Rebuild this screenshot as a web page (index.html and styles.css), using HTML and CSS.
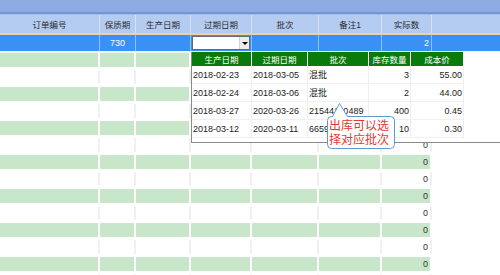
FILE: index.html
```html
<!DOCTYPE html>
<html lang="zh">
<head>
<meta charset="utf-8">
<link rel="stylesheet" href="styles.css">
</head>
<body>
<div class="app">
  <div class="titlebar"></div>
  <div class="rule"></div>
  <div class="row head">
    <div class="c">订单编号</div>
    <div class="c">保质期</div>
    <div class="c">生产日期</div>
    <div class="c">过期日期</div>
    <div class="c">批次</div>
    <div class="c">备注1</div>
    <div class="c">实际数</div>
    <div class="c fill"></div>
  </div>
  <div class="row sel">
    <div class="c"></div>
    <div class="c center">730</div>
    <div class="c"></div>
    <div class="c combo-cell"><div class="combo"><span class="combo-btn"><span class="arrow"></span></span></div></div>
    <div class="c"></div>
    <div class="c"></div>
    <div class="c num">2</div>
    <div class="c fill"></div>
  </div>
  <div class="rows">
    <div class="drow g"><div class="c"></div><div class="c"></div><div class="c"></div><div class="c"></div><div class="c"></div><div class="c"></div><div class="c num"></div></div>
    <div class="drow"><div class="c"></div><div class="c"></div><div class="c"></div><div class="c"></div><div class="c"></div><div class="c"></div><div class="c num"></div></div>
    <div class="drow g"><div class="c"></div><div class="c"></div><div class="c"></div><div class="c"></div><div class="c"></div><div class="c"></div><div class="c num"></div></div>
    <div class="drow"><div class="c"></div><div class="c"></div><div class="c"></div><div class="c"></div><div class="c"></div><div class="c"></div><div class="c num"></div></div>
    <div class="drow g"><div class="c"></div><div class="c"></div><div class="c"></div><div class="c"></div><div class="c"></div><div class="c"></div><div class="c num"></div></div>
    <div class="drow"><div class="c"></div><div class="c"></div><div class="c"></div><div class="c"></div><div class="c"></div><div class="c"></div><div class="c num">0</div></div>
    <div class="drow g"><div class="c"></div><div class="c"></div><div class="c"></div><div class="c"></div><div class="c"></div><div class="c"></div><div class="c num">0</div></div>
    <div class="drow"><div class="c"></div><div class="c"></div><div class="c"></div><div class="c"></div><div class="c"></div><div class="c"></div><div class="c num">0</div></div>
    <div class="drow g"><div class="c"></div><div class="c"></div><div class="c"></div><div class="c"></div><div class="c"></div><div class="c"></div><div class="c num">0</div></div>
    <div class="drow"><div class="c"></div><div class="c"></div><div class="c"></div><div class="c"></div><div class="c"></div><div class="c"></div><div class="c num">0</div></div>
    <div class="drow g"><div class="c"></div><div class="c"></div><div class="c"></div><div class="c"></div><div class="c"></div><div class="c"></div><div class="c num">0</div></div>
    <div class="drow"><div class="c"></div><div class="c"></div><div class="c"></div><div class="c"></div><div class="c"></div><div class="c"></div><div class="c num">0</div></div>
    <div class="drow g"><div class="c"></div><div class="c"></div><div class="c"></div><div class="c"></div><div class="c"></div><div class="c"></div><div class="c num">0</div></div>
    <div class="drow"><div class="c"></div><div class="c"></div><div class="c"></div><div class="c"></div><div class="c"></div><div class="c"></div><div class="c num"></div></div>
  </div>

  <div class="popup">
    <div class="prow phead">
      <div class="p">生产日期</div>
      <div class="p">过期日期</div>
      <div class="p">批次</div>
      <div class="p">库存数量</div>
      <div class="p">成本价</div>
    </div>
    <div class="prow">
      <div class="p">2018-02-23</div>
      <div class="p">2018-03-05</div>
      <div class="p">混批</div>
      <div class="p r">3</div>
      <div class="p r">55.00</div>
    </div>
    <div class="prow">
      <div class="p">2018-02-24</div>
      <div class="p">2018-03-06</div>
      <div class="p">混批</div>
      <div class="p r">2</div>
      <div class="p r">44.00</div>
    </div>
    <div class="prow">
      <div class="p">2018-03-27</div>
      <div class="p">2020-03-26</div>
      <div class="p">21544110489</div>
      <div class="p r">400</div>
      <div class="p r">0.45</div>
    </div>
    <div class="prow">
      <div class="p">2018-03-12</div>
      <div class="p">2020-03-11</div>
      <div class="p">66590001</div>
      <div class="p r">10</div>
      <div class="p r">0.30</div>
    </div>
  </div>

  <div class="callout">
    <svg class="bubble" width="72" height="50" viewBox="0 0 72 50">
      <path d="M7.5,15.5 L14.5,2.5 L22.5,15.5 L65.5,15.5 Q69.5,15.5 69.5,19.5 L69.5,43.5 Q69.5,47.5 65.5,47.5 L6.5,47.5 Q2.5,47.5 2.5,43.5 L2.5,19.5 Q2.5,15.5 6.5,15.5 Z" fill="#ffffff" stroke="#5b9bd5" stroke-width="1"/>
    </svg>
    <div class="callout-text">出库可以选<br>择对应批次</div>
  </div>
</div>
</body>
</html>
```

FILE: styles.css
```css
html, body {
  margin: 0;
  padding: 0;
  background: #ffffff;
}
body {
  width: 500px;
  height: 275px;
  overflow: hidden;
  font-family: "Liberation Sans", "Noto Sans CJK SC", sans-serif;
  font-size: 9px;
  color: #222;
}
.app {
  position: relative;
  width: 500px;
  height: 275px;
  overflow: hidden;
}
.titlebar {
  height: 12px;
  background: #8eaae3;
}
.rule {
  height: 1px;
  border-top: 2px solid #7893d0;
  background: #a3bcec;
}
.row {
  display: grid;
  grid-template-columns: 100px 36px 55px 61px 67px 63px 50px 1fr;
}
.row .c {
  box-sizing: border-box;
  border-right: 1px solid #d6e3f6;
  display: flex;
  align-items: center;
  justify-content: center;
  white-space: nowrap;
}
.row .c.fill {
  border-right: none;
}
.head {
  height: 20px;
  box-sizing: border-box;
  background: #b5ccf1;
  border-bottom: 2px solid #e4d6aa;
  font-size: 8.5px;
  color: #2a2a2a;
}
.sel {
  height: 18px;
  box-sizing: border-box;
  background: #3a90f5;
  border-bottom: 2px solid #eef3f8;
  color: #fff;
}
.sel .c {
  border-right-color: #8fc0f8;
}
.sel .c.num, .drow .c.num {
  justify-content: flex-end;
  padding-right: 2px;
}
.combo-cell {
  align-items: flex-start !important;
  justify-content: flex-start !important;
  padding: 1px 0 0 1px;
}
.combo {
  box-sizing: border-box;
  width: 58px;
  height: 14px;
  background: #fff;
  border: 1px solid #6a6a6a;
  display: flex;
  justify-content: flex-end;
  align-items: stretch;
}
.combo-btn {
  width: 9px;
  background: #ececec;
  border-left: 1px solid #d0d0d0;
  display: flex;
  align-items: center;
  justify-content: center;
}
.arrow {
  width: 0;
  height: 0;
  border-left: 3px solid transparent;
  border-right: 3px solid transparent;
  border-top: 3px solid #000;
}
.rows {
  width: 432px;
}
.drow {
  display: grid;
  grid-template-columns: 100px 36px 55px 61px 67px 63px 50px;
  height: 17px;
  box-sizing: border-box;
  padding-bottom: 3px;
  background: #fff;
}
.drow .c {
  box-sizing: border-box;
  border-right: 2px solid #f0f0f0;
  display: flex;
  align-items: center;
  color: #333;
}
.drow.g .c {
  background: #c8e6c9;
  border-right-color: #fff;
}
.center {
  justify-content: center;
}
.popup {
  position: absolute;
  left: 191px;
  top: 52px;
  width: 320px;
  height: 91px;
  box-sizing: border-box;
  background: #fff;
  border-left: 1px solid #8a8a8a;
  border-bottom: 1px solid #8a8a8a;
}
.prow {
  display: grid;
  grid-template-columns: 60px 56px 61px 42px 53px;
  width: 272px;
  height: 18px;
  box-sizing: border-box;
  border-bottom: 1px solid #efefef;
}
.prow .p {
  box-sizing: border-box;
  border-right: 1px solid #efefef;
  display: flex;
  align-items: center;
  padding-left: 1px;
  white-space: nowrap;
  overflow: hidden;
  color: #222;
}
.prow .p.r {
  justify-content: flex-end;
  padding-left: 0;
  padding-right: 1px;
}
.phead {
  height: 14px;
  border-bottom: none;
}
.phead .p {
  background: #097b0b;
  color: #fff;
  justify-content: center;
  border-right: 1px solid #fff;
  font-size: 8.5px;
  padding-left: 0;
}
.callout {
  position: absolute;
  left: 325px;
  top: 101px;
  width: 72px;
  height: 50px;
  box-sizing: border-box;
  padding: 17px 0 0 4px;
}
.bubble {
  position: absolute;
  left: 0;
  top: 0;
}
.callout-text {
  position: relative;
  font-family: "Noto Sans CJK SC", sans-serif;
  font-size: 12px;
  line-height: 14px;
  color: #e8392f;
  white-space: nowrap;
}
```
